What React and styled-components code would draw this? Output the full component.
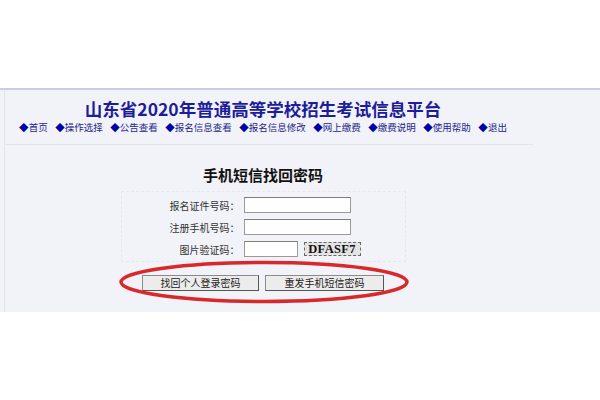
import React from "react";
import styled, { createGlobalStyle } from "styled-components";

const Global = createGlobalStyle`
  html, body {
    margin: 0;
    padding: 0;
    background: #ffffff;
  }
  body {
    font-family: "Noto Sans CJK SC", "Noto Sans", sans-serif;
    width: 600px;
    height: 400px;
    overflow: hidden;
  }
`;

const TopSpace = styled.div`
  height: 88px;
  background: #ffffff;
`;

const Panel = styled.div`
  height: 222px;
  border-top: 2px solid #c9cedf;
  background: #f2f3f8;
`;

const Column = styled.div`
  margin-left: 4px;
  width: 516px;
  height: 100%;
  border-left: 1px solid #e3e5ee;
  display: flex;
  flex-direction: column;
  align-items: center;
`;

const Header = styled.div`
  align-self: stretch;
  margin-right: -12px;
  padding: 9px 12px 10px 0;
  border-bottom: 1px solid #e2e4ec;
  display: flex;
  flex-direction: column;
  align-items: center;
`;

const Title = styled.h1`
  margin: 0;
  font-size: 17.5px;
  line-height: 20px;
  font-weight: 700;
  color: #1d1d9b;
  white-space: nowrap;
`;

const Nav = styled.div`
  margin-top: 1px;
  display: flex;
  gap: 7.5px;
  font-size: 9.5px;
  line-height: 14px;
  white-space: nowrap;
`;

const NavItem = styled.a`
  color: #24248c;
  text-decoration: none;
  &::before {
    content: "◆";
    color: #0000a8;
  }
`;

const FormTitle = styled.h2`
  margin: 21px 0 0;
  font-size: 15px;
  line-height: 18px;
  font-weight: 700;
  color: #111111;
`;

const FormBox = styled.div`
  margin-top: 7px;
  width: 283px;
  padding: 2px 0 1px;
  border: 1px dashed #e6e8ef;
  display: grid;
  grid-template-columns: 118px 1fr;
  grid-auto-rows: 22px;
  column-gap: 4px;
  align-items: center;
`;

const Label = styled.label`
  text-align: right;
  font-size: 10px;
  color: #333333;
  white-space: nowrap;
`;

const Field = styled.div`
  display: flex;
  align-items: center;
  gap: 6px;
`;

const Input = styled.input`
  box-sizing: border-box;
  width: ${(p) => p.$w}px;
  height: 16px;
  margin: 0;
  padding: 0 2px;
  border: 1px solid #9a9a9a;
  border-top-color: #7d7d7d;
  background: #ffffff;
`;

const Captcha = styled.span`
  box-sizing: border-box;
  width: 57px;
  height: 14px;
  border: 1px dashed #6a6a6a;
  background: #e4e4e4;
  font-family: "Liberation Serif", serif;
  font-weight: 700;
  font-size: 12.5px;
  line-height: 12px;
  color: #111111;
  text-align: center;
  letter-spacing: 0.3px;
`;

const ButtonRow = styled.div`
  position: relative;
  margin-top: 13px;
  display: flex;
  gap: 6px;
`;

const Button = styled.button`
  box-sizing: border-box;
  width: ${(p) => p.$w}px;
  height: 16px;
  margin: 0;
  padding: 0;
  border: 1px solid #8a8a8a;
  border-right-color: #555555;
  border-bottom-color: #555555;
  background: #ececec;
  font-family: "Noto Sans CJK SC", sans-serif;
  font-size: 10px;
  line-height: 14px;
  color: #222222;
`;

const Ring = styled.svg`
  position: absolute;
  left: -24px;
  top: -15px;
  pointer-events: none;
`;

const navItems = [
  "首页",
  "操作选择",
  "公告查看",
  "报名信息查看",
  "报名信息修改",
  "网上缴费",
  "缴费说明",
  "使用帮助",
  "退出",
];

export default function App() {
  return (
    <>
      <Global />
      <TopSpace />
      <Panel>
        <Column>
          <Header>
            <Title>山东省2020年普通高等学校招生考试信息平台</Title>
            <Nav>
              {navItems.map((item) => (
                <NavItem key={item} href="#">
                  {item}
                </NavItem>
              ))}
            </Nav>
          </Header>

          <FormTitle>手机短信找回密码</FormTitle>
          <FormBox>
            <Label>报名证件号码：</Label>
            <Field>
              <Input $w={107} />
            </Field>
            <Label>注册手机号码：</Label>
            <Field>
              <Input $w={107} />
            </Field>
            <Label>图片验证码：</Label>
            <Field>
              <Input $w={54} />
              <Captcha>DFASF7</Captcha>
            </Field>
          </FormBox>

          <ButtonRow>
            <Button $w={117}>找回个人登录密码</Button>
            <Button $w={119}>重发手机短信密码</Button>
            <Ring width="292" height="44" viewBox="0 0 292 44">
              <ellipse
                cx="146"
                cy="22"
                rx="143"
                ry="19.5"
                fill="none"
                stroke="#d8282c"
                strokeWidth="3.5"
              />
            </Ring>
          </ButtonRow>
        </Column>
      </Panel>
    </>
  );
}
